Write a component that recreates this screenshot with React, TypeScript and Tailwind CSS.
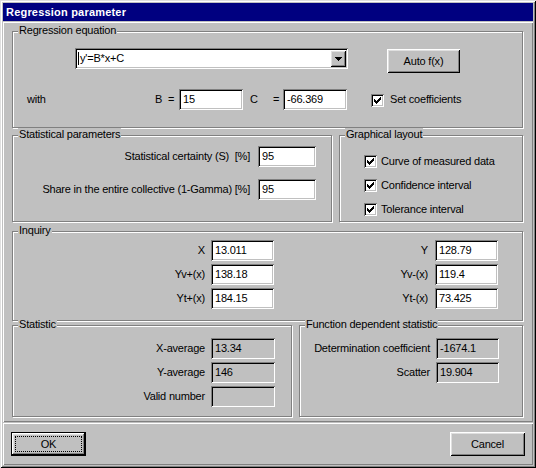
import React from 'react';

const sunken =
  'shadow-[inset_1px_1px_0_#808080,inset_-1px_-1px_0_#ffffff,inset_2px_2px_0_#000000,inset_-2px_-2px_0_#c0c0c0]';
const raised =
  'shadow-[inset_1px_1px_0_#ffffff,inset_-1px_-1px_0_#000000,inset_2px_2px_0_#dfdfdf,inset_-2px_-2px_0_#808080]';

const Group: React.FC<{ label: string; className?: string; children?: React.ReactNode }> = ({
  label,
  className = '',
  children,
}) => (
  <div
    className={`relative border border-[#808080] shadow-[inset_1px_1px_0_#ffffff,1px_1px_0_#ffffff] ${className}`}
  >
    <span className="absolute left-[5px] top-[-8px] bg-[#c0c0c0] px-px leading-[13px]">{label}</span>
    {children}
  </div>
);

const Field: React.FC<{ value: string; w: string; readOnly?: boolean }> = ({ value, w, readOnly }) => (
  <div
    className={`${sunken} ${w} h-[21px] flex items-center pl-[4px] leading-[13px] ${
      readOnly ? 'bg-[#c0c0c0]' : 'bg-white'
    }`}
  >
    {value}
  </div>
);

const Check: React.FC = () => (
  <div className={`${sunken} w-[13px] h-[13px] bg-white shrink-0`}>
    <svg width="13" height="13" viewBox="0 0 13 13" shapeRendering="crispEdges">
      <path d="M3 5 L5 7 L10 2 L10 5 L5 10 L3 8 Z" fill="#000" />
    </svg>
  </div>
);

const LabeledField: React.FC<{ label: string; labelW: string; gap: string; value: string; w: string; readOnly?: boolean }> = ({
  label,
  labelW,
  gap,
  value,
  w,
  readOnly,
}) => (
  <div className="flex items-center h-[21px]">
    <span className={`${labelW} text-right whitespace-nowrap`}>{label}</span>
    <div className={gap}>
      <Field value={value} w={w} readOnly={readOnly} />
    </div>
  </div>
);

export default function App() {
  return (
    <div className="w-[536px] h-[468px] p-[3px] flex flex-col bg-[#c0c0c0] text-black text-[11px] font-['Liberation_Sans',Arial,sans-serif] shadow-[inset_1px_1px_0_#dfdfdf,inset_-1px_-1px_0_#000000,inset_2px_2px_0_#ffffff,inset_-2px_-2px_0_#808080]">
      {/* title bar */}
      <div className="h-[18px] bg-[#000080] text-white font-bold text-[11px] flex items-center pl-[3px] tracking-[0.2px]">
        Regression parameter
      </div>

      <div className="tracking-[-0.2px] flex flex-col">
        {/* upper panel */}
        <div className="mt-px h-[400px] pl-[9px] pr-[10px] pt-[9px] flex flex-col shadow-[inset_1px_1px_0_#ffffff,inset_-1px_-1px_0_#808080]">
          <Group label="Regression equation" className="h-[97px]">
            <div className="flex items-start pt-[16px] pl-[62px]">
              <div className={`${sunken} w-[273px] h-[21px] bg-white flex p-[2px]`}>
                <div className="flex-1 flex items-center pl-px">
                  <span className="w-px h-[13px] bg-black mr-[1px]" />
                  <span className="leading-[13px]">y'=B*x+C</span>
                </div>
                <div className={`${raised} w-[16px] h-[17px] bg-[#c0c0c0] flex items-center justify-center`}>
                  <svg width="7" height="4" viewBox="0 0 7 4" shapeRendering="crispEdges">
                    <path d="M0 0 H7 L3.5 4 Z" fill="#000" />
                  </svg>
                </div>
              </div>
              <button className={`${raised} ml-[39px] mt-px w-[73px] h-[24px] bg-[#c0c0c0] leading-[13px]`}>
                Auto f(x)
              </button>
            </div>
            <div className="flex items-center h-[21px] mt-[16px] pl-[14px]">
              <span className="w-[128px]">with</span>
              <span className="w-[13px]">B</span>
              <span className="w-[11px]">=</span>
              <Field value="15" w="w-[64px]" />
              <span className="ml-[7px] w-[23px]">C</span>
              <span className="w-[10px]">=</span>
              <Field value="-66.369" w="w-[64px]" />
              <div className="ml-[24px] mt-[2px]">
                <Check />
              </div>
              <span className="ml-[6px]">Set coefficients</span>
            </div>
          </Group>

          <div className="flex mt-[7px]">
            <Group label="Statistical parameters" className="w-[320px] h-[87px]">
              <div className="flex flex-col gap-[12px] pt-[10px] pr-[15px]">
                <div className="flex items-center justify-end h-[21px]">
                  <span className="whitespace-nowrap">Statistical certainty (S)&nbsp;&nbsp;[%]</span>
                  <div className="ml-[8px]">
                    <Field value="95" w="w-[58px]" />
                  </div>
                </div>
                <div className="flex items-center justify-end h-[21px]">
                  <span className="whitespace-nowrap">Share in the entire collective (1-Gamma) [%]</span>
                  <div className="ml-[8px]">
                    <Field value="95" w="w-[58px]" />
                  </div>
                </div>
              </div>
            </Group>
            <Group label="Graphical layout" className="ml-[7px] w-[184px] h-[87px]">
              <div className="flex flex-col gap-[11px] pt-[19px] pl-[24px]">
                {['Curve of measured data', 'Confidence interval', 'Tolerance interval'].map((t) => (
                  <div key={t} className="flex items-center h-[13px]">
                    <Check />
                    <span className="ml-[4px] leading-[13px]">{t}</span>
                  </div>
                ))}
              </div>
            </Group>
          </div>

          <Group label="Inquiry" className="mt-[9px] h-[90px]">
            <div className="flex flex-col gap-[3px] pt-[8px]">
              {[
                ['X', '13.011', 'Y', '128.79'],
                ['Yv+(x)', '138.18', 'Yv-(x)', '119.4'],
                ['Yt+(x)', '184.15', 'Yt-(x)', '73.425'],
              ].map(([l1, v1, l2, v2]) => (
                <div key={l1} className="flex items-center">
                  <LabeledField label={l1} labelW="w-[192px]" gap="ml-[6px]" value={v1} w="w-[63px]" />
                  <LabeledField label={l2} labelW="w-[154px]" gap="ml-[7px]" value={v2} w="w-[63px]" />
                </div>
              ))}
            </div>
          </Group>

          <div className="flex mt-[4px]">
            <Group label="Statistic" className="w-[280px] h-[92px]">
              <div className="flex flex-col gap-[3px] pt-[12px]">
                <LabeledField label="X-average" labelW="w-[192px]" gap="ml-[6px]" value="13.34" w="w-[64px]" readOnly />
                <LabeledField label="Y-average" labelW="w-[192px]" gap="ml-[6px]" value="146" w="w-[64px]" readOnly />
                <LabeledField label="Valid number" labelW="w-[192px]" gap="ml-[6px]" value="" w="w-[64px]" readOnly />
              </div>
            </Group>
            <Group label="Function dependent statistic" className="ml-[7px] w-[224px] h-[92px]">
              <div className="flex flex-col gap-[3px] pt-[12px]">
                <LabeledField
                  label="Determination coefficient"
                  labelW="w-[130px]"
                  gap="ml-[6px]"
                  value="-1674.1"
                  w="w-[63px]"
                  readOnly
                />
                <LabeledField label="Scatter" labelW="w-[130px]" gap="ml-[6px]" value="19.904" w="w-[63px]" readOnly />
              </div>
            </Group>
          </div>
        </div>

        {/* button panel */}
        <div className="mt-px h-[42px] flex items-start justify-between pl-[8px] pr-[8px] pt-[9px] shadow-[inset_1px_1px_0_#ffffff,inset_-1px_-1px_0_#808080]">
          <button className="relative w-[75px] h-[24px] bg-[#c0c0c0] leading-[13px] shadow-[inset_0_0_0_1px_#000000,inset_-2px_-2px_0_#000000,inset_2px_2px_0_#ffffff,inset_-3px_-3px_0_#808080,inset_3px_3px_0_#dfdfdf]">
            OK
            <span className="absolute left-[4px] right-[4px] top-[4px] bottom-[4px] border border-dotted border-black" />
          </button>
          <button className={`${raised} w-[75px] h-[24px] bg-[#c0c0c0] leading-[13px]`}>Cancel</button>
        </div>
      </div>
    </div>
  );
}
